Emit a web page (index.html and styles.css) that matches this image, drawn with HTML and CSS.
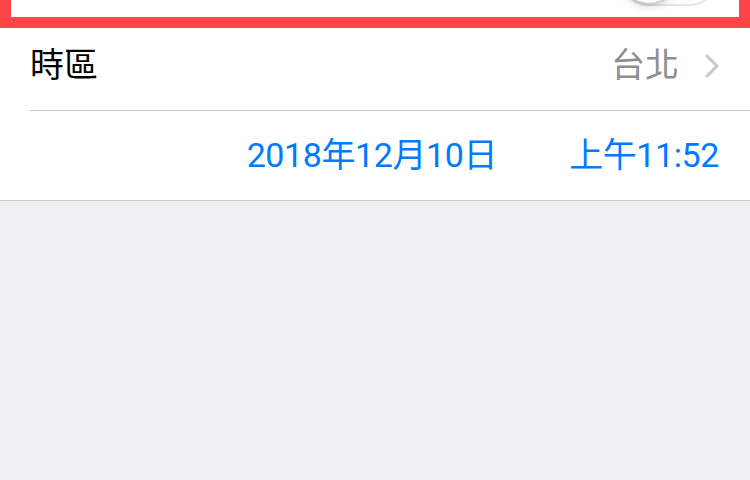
FILE: index.html
```html
<!DOCTYPE html>
<html lang="zh-Hant">
  <head>
    <meta charset="UTF-8" />
    <meta name="viewport" content="width=device-width, initial-scale=1.0" />
    <title>日期與時間</title>
    <link rel="stylesheet" href="styles.css">
  </head>
  <body>
    <main class="settings">
      <!-- Highlighted auto-set row (cut off at top) -->
      <div class="highlight">
        <div class="switch">
          <span class="knob"></span>
        </div>
      </div>

      <div class="group">
        <div class="cell zone">
          <span class="label">時區</span>
          <span class="detail">台北</span>
          <svg class="chevron" width="16" height="24" viewBox="0 0 16 24">
            <path d="M3 2 L13 12 L3 22" fill="none" stroke="#c7c7cc" stroke-width="3" stroke-linecap="round" stroke-linejoin="round" />
          </svg>
        </div>

        <div class="cell picker">
          <span class="value">2018年12月10日</span>
          <span class="value">上午11:52</span>
        </div>
      </div>
    </main>
  </body>
</html>
```

FILE: styles.css
```css
/* Reset & Base Styles */
* {
  margin: 0;
  padding: 0;
  box-sizing: border-box;
}

body {
  background-color: #efeff4;
  font-family: "Roboto", "Noto Sans CJK TC", sans-serif;
  color: #000;
}

/* Red outlined row at the top */
.highlight {
  height: 28px;
  background-color: #fff;
  border: 11px solid #ff4545;
  border-top: none;
  overflow: hidden;
  display: flex;
  justify-content: flex-end;
  align-items: flex-end;
  padding-right: 19px;
}

.switch {
  flex: none;
  width: 102px;
  height: 62px;
  margin-bottom: 11px;
  border-radius: 31px;
  border: 2px solid #e5e5ea;
  background-color: #fff;
  padding: 1px;
}

.knob {
  display: block;
  width: 56px;
  height: 56px;
  border-radius: 50%;
  background-color: #fff;
  box-shadow: 0 3px 8px rgba(0, 0, 0, 0.18), 0 3px 1px rgba(0, 0, 0, 0.06),
    0 0 0 1px rgba(0, 0, 0, 0.04);
}

/* Table group */
.group {
  background-color: #fff;
  border-bottom: 1px solid #c8c7cc;
}

.cell {
  display: flex;
  align-items: center;
  font-size: 34px;
  line-height: 1;
}

.zone {
  height: 83px;
  margin-left: 30px;
  padding-right: 30px;
  padding-bottom: 8px;
  border-bottom: 1px solid #c8c7cc;
}

.label {
  flex: 1;
}

.detail {
  color: #8e8e93;
  margin-right: 25px;
}

.chevron {
  margin-top: 2px;
}

.picker {
  height: 89px;
  justify-content: flex-end;
  gap: 72px;
  padding-right: 31px;
  padding-bottom: 2px;
}

.value {
  color: #007aff;
  letter-spacing: -0.4px;
}
```
